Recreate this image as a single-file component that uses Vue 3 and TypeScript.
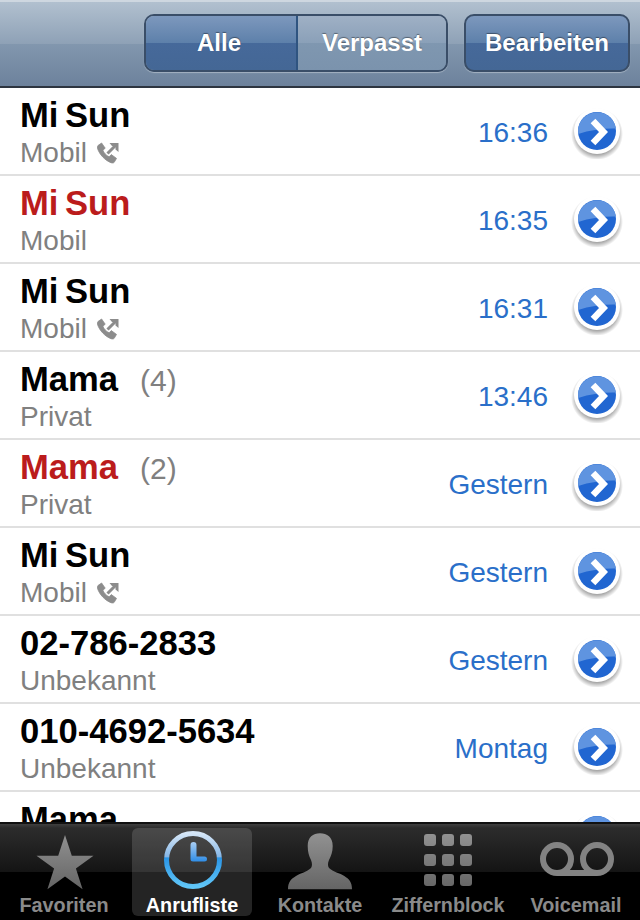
<template>
  <div class="phone">
    <header class="nav">
      <div class="segments">
        <span class="seg seg-on">Alle</span>
        <span class="seg">Verpasst</span>
      </div>
      <span class="edit">Bearbeiten</span>
    </header>

    <ul class="calls">
      <li v-for="(call, i) in calls" :key="i" class="call">
        <div class="who">
          <div class="name-line">
            <span class="name" :class="{ missed: call.missed }">{{ call.name }}</span>
            <span v-if="call.count" class="count">({{ call.count }})</span>
          </div>
          <div class="kind">
            <span>{{ call.kind }}</span>
            <svg v-if="call.outgoing" class="out-icon" viewBox="0 0 22 22" width="22" height="22">
              <path fill="#8c8c8c" stroke="#8c8c8c" stroke-width=".8" d="M1 3.500 4.600 1l3.600 5.200-2.300 2c.9 2.600 3.300 5.300 6.200 6.600l2.200-2.200 5.200 3.800-2.300 3.900c-.6.700-1.800.8-3.200.4C8 18.300 2.500 12.600.5 6.400c-.2-1.100 0-2.200.5-2.900Z" />
              <path fill="none" stroke="#8c8c8c" stroke-width="3" d="M10.500 11.500 19 3" />
              <path fill="#8c8c8c" d="M12.500 1H21.500V10L18.500 7.500V4H15Z" />
            </svg>
          </div>
        </div>
        <span class="when">{{ call.when }}</span>
        <svg class="more" viewBox="0 0 56 56" width="56" height="56">
          <defs>
            <radialGradient :id="`halo${i}`" cx="0.5" cy="0.5" r="0.5">
              <stop offset="0.78" stop-color="#000" stop-opacity="0.35" />
              <stop offset="1" stop-color="#000" stop-opacity="0" />
            </radialGradient>
          </defs>
          <circle cx="28" cy="31" r="26" :fill="`url(#halo${i})`" />
          <circle cx="28" cy="28" r="23" fill="#fff" />
          <circle cx="28" cy="28" r="19" fill="#2166d1" />
          <path d="M9.200 31A19 19 0 0 1 46.900 25.500Q27 25 9.200 31Z" fill="#5f94e0" />
          <path d="M24 18 34.500 29 24 40" fill="none" stroke="#fff" stroke-width="6.500" />
        </svg>
      </li>
    </ul>

    <nav class="tabs">
      <div v-for="tab in tabs" :key="tab.label" class="tab" :class="{ 'tab-on': tab.active }">
        <svg class="tab-icon" viewBox="0 0 80 66" width="80" height="66">
          <defs>
            <linearGradient :id="`grey-${tab.icon}`" gradientUnits="userSpaceOnUse" x1="0" y1="5" x2="0" y2="62">
              <stop offset="0" stop-color="#929292" />
              <stop offset="1" stop-color="#646464" />
            </linearGradient>
          </defs>
          <path
            v-if="tab.icon === 'star'"
            :fill="`url(#grey-${tab.icon})`"
            d="M41 7 47.800 27.700H69.500L51.900 40.600 58.600 61.300 41 48.500 23.400 61.300 30.100 40.600 12.500 27.700H34.200Z"
          />
          <template v-else-if="tab.icon === 'clock'">
            <defs>
              <linearGradient id="ring" x1="0" y1="0" x2="0" y2="1">
                <stop offset="0" stop-color="#d6e7f8" />
                <stop offset="0.44" stop-color="#85b6e6" />
                <stop offset="0.46" stop-color="#2a95e6" />
                <stop offset="1" stop-color="#60c6f8" />
              </linearGradient>
              <linearGradient id="hand" x1="0" y1="0" x2="0" y2="1">
                <stop offset="0" stop-color="#a9cdf2" />
                <stop offset="1" stop-color="#2f8de6" />
              </linearGradient>
            </defs>
            <circle cx="41" cy="32" r="26.500" fill="none" stroke="url(#ring)" stroke-width="5" />
            <path fill="url(#hand)" d="M38.500 17a3 3 0 0 1 6 0V28.500H52.500a2.500 2.500 0 0 1 0 5H41a2.500 2.500 0 0 1-2.500-2.500Z" />
          </template>
          <path
            v-else-if="tab.icon === 'person'"
            :fill="`url(#grey-${tab.icon})`"
            d="M40 5.300C47 5.300 52.700 9 52.700 18C52.700 24 51 28 49 32C47.700 35 47.500 38 49 40C53 44 60 45 64.300 48C69 51 72 54 72 61.300H8C8 54 11 51 16 48C20.500 45 27 44 31 40C32.500 38 32.200 35 31 32C29 28 27.700 24 27.700 18C27.700 9 33 5.300 40 5.300Z"
          />
          <g v-else-if="tab.icon === 'keypad'" :fill="`url(#grey-${tab.icon})`">
            <template v-for="row in [6, 26, 46]" :key="row">
              <rect v-for="col in [16, 34, 52]" :key="col" :x="col" :y="row" width="12" height="12" rx="3" />
            </template>
          </g>
          <g v-else fill="none" stroke="#838383" stroke-width="6">
            <circle cx="21" cy="31" r="14" />
            <circle cx="61" cy="31" r="14" />
            <path d="M21 45H61" />
          </g>
        </svg>
        <span class="tab-label">{{ tab.label }}</span>
      </div>
    </nav>
  </div>
</template>

<script setup lang="ts">
interface Call {
  name: string
  kind: string
  when: string
  missed?: boolean
  outgoing?: boolean
  count?: number
}

const calls: Call[] = [
  { name: 'Mi Sun', kind: 'Mobil', when: '16:36', outgoing: true },
  { name: 'Mi Sun', kind: 'Mobil', when: '16:35', missed: true },
  { name: 'Mi Sun', kind: 'Mobil', when: '16:31', outgoing: true },
  { name: 'Mama', kind: 'Privat', when: '13:46', count: 4 },
  { name: 'Mama', kind: 'Privat', when: 'Gestern', missed: true, count: 2 },
  { name: 'Mi Sun', kind: 'Mobil', when: 'Gestern', outgoing: true },
  { name: '02-786-2833', kind: 'Unbekannt', when: 'Gestern' },
  { name: '010-4692-5634', kind: 'Unbekannt', when: 'Montag' },
  { name: 'Mama', kind: 'Privat', when: 'Montag' }
]

const tabs = [
  { label: 'Favoriten', icon: 'star' },
  { label: 'Anrufliste', icon: 'clock', active: true },
  { label: 'Kontakte', icon: 'person' },
  { label: 'Ziffernblock', icon: 'keypad' },
  { label: 'Voicemail', icon: 'voicemail' }
]
</script>

<style scoped>
.phone {
  width: 640px;
  height: 920px;
  display: flex;
  flex-direction: column;
  overflow: hidden;
  background: #fff;
  font-family: "Liberation Sans", Arial, sans-serif;
}

/* Top bar */
.nav {
  flex: 0 0 88px;
  box-sizing: border-box;
  display: flex;
  justify-content: flex-end;
  align-items: center;
  gap: 16px;
  padding: 0 10px 2px 0;
  background: linear-gradient(#b1c0cf, #8ea1b6 50%, #8297ae 50%, #6d829c);
  border-top: 2px solid #ced7e0;
  border-bottom: 2px solid #2d3540;
}

.segments {
  display: flex;
  width: 304px;
  height: 58px;
  box-sizing: border-box;
  border: 2px solid #3a4e68;
  border-radius: 10px;
  overflow: hidden;
  box-shadow: 0 1px 1px rgba(255, 255, 255, 0.35);
}

.seg {
  flex: 1;
  box-sizing: border-box;
  display: flex;
  align-items: center;
  justify-content: center;
  color: #fff;
  font-size: 24px;
  font-weight: 700;
  text-shadow: 0 -1px 1px rgba(0, 0, 0, 0.4);
  background: linear-gradient(#9fb0c5, #8aa0b8 50%, #7f97b0 50%, #7b93ad);
}

.seg-on {
  flex: 0 0 152px;
  padding-right: 4px;
  border-right: 2px solid #2f5480;
  background: linear-gradient(#7d98bd, #5d80aa 50%, #46699a 50%, #446795);
}

.edit {
  width: 166px;
  height: 58px;
  box-sizing: border-box;
  display: flex;
  align-items: center;
  justify-content: center;
  border: 2px solid #3a4e68;
  border-radius: 10px;
  color: #fff;
  font-size: 24px;
  font-weight: 700;
  text-shadow: 0 -1px 1px rgba(0, 0, 0, 0.4);
  background: linear-gradient(#7d98bd, #5d80aa 50%, #46699a 50%, #446795);
  box-shadow: 0 1px 1px rgba(255, 255, 255, 0.35);
}

/* Call list */
.calls {
  flex: 1;
  min-height: 0;
  margin: 0;
  padding: 0;
  list-style: none;
  overflow: hidden;
}

.call {
  height: 88px;
  box-sizing: border-box;
  display: flex;
  align-items: center;
  padding: 0 15px 0 20px;
  border-bottom: 2px solid #e0e0e0;
}

.who {
  flex: 1;
  min-width: 0;
}

.name-line {
  display: flex;
  align-items: baseline;
  gap: 22px;
  height: 44px;
  line-height: 42px;
}

.name {
  color: #000;
  font-size: 34.600px;
  font-weight: 700;
  word-spacing: -3px;
}

.name.missed {
  color: #bb1c1c;
}

.count {
  color: #808080;
  font-size: 30px;
}

.kind {
  display: flex;
  align-items: center;
  gap: 10px;
  height: 30px;
  line-height: 30px;
  color: #808080;
  font-size: 28px;
}

.when {
  color: #2a6fc9;
  font-size: 28px;
  margin: 4px 21px 0 0;
}

.more {
  flex: 0 0 auto;
  margin-top: -1px;
}

/* Tab bar */
.tabs {
  flex: 0 0 98px;
  box-sizing: border-box;
  display: flex;
  gap: 8px;
  padding: 4px 4px 4px;
  background: linear-gradient(#3f3f3f 0, #2c2c2c 4px, #141414 48px, #000 48px);
  border-top: 2px solid #111;
}

.tab {
  flex: 1;
  min-width: 0;
  display: flex;
  flex-direction: column;
  align-items: center;
  border-radius: 6px;
}

.tab-on {
  background: rgba(255, 255, 255, 0.14);
}

.tab-label {
  color: #8a8a8a;
  font-size: 19.800px;
  font-weight: 700;
  white-space: nowrap;
  line-height: 22px;
}

.tab-on .tab-label {
  color: #fff;
}
</style>
